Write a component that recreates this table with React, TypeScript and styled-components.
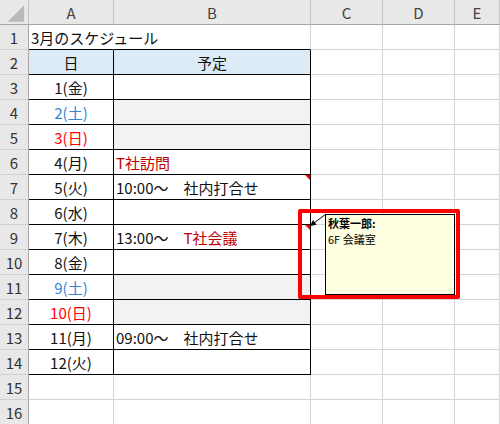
import React from "react";
import styled, { createGlobalStyle } from "styled-components";

const Global = createGlobalStyle`
  html, body { margin: 0; padding: 0; background: #fff; overflow: hidden; }
  #root { width: 500px; height: 424px; }
`;

const FONT = `"Noto Sans CJK JP", "Noto Sans", sans-serif`;

const Sheet = styled.div`
  position: relative;
  width: 500px;
  height: 424px;
  overflow: hidden;
  background: #fff;
  font-family: ${FONT};
`;

const Grid = styled.div`
  display: grid;
  grid-template-columns: 29px 85px 197px 72px 72px 45px;
  grid-auto-rows: 25px;
`;

const ColHead = styled.div`
  box-sizing: border-box;
  background: #e8e8e8;
  border-right: 1px solid #c4c4c4;
  border-bottom: 1px solid #a6a6a6;
  display: flex;
  align-items: center;
  justify-content: center;
  font-size: 15px;
  color: #444;
  position: relative;
`;

const RowHead = styled.div`
  box-sizing: border-box;
  background: #e8e8e8;
  border-right: 1px solid #a6a6a6;
  border-bottom: 1px solid #d0d0d0;
  display: flex;
  align-items: center;
  justify-content: center;
  font-size: 15px;
  color: #333;
`;

const Cell = styled.div<{
  $align?: "left" | "center";
  $bg?: string;
  $right?: string;
  $bottom?: string;
  $note?: boolean;
}>`
  box-sizing: border-box;
  position: relative;
  display: flex;
  align-items: center;
  justify-content: ${(p) => (p.$align === "center" ? "center" : "flex-start")};
  padding: 0 2px;
  font-size: 15px;
  color: #111;
  white-space: nowrap;
  background: ${(p) => p.$bg ?? "transparent"};
  border-right: 1px solid ${(p) => p.$right ?? "#d4d4d4"};
  border-bottom: 1px solid ${(p) => p.$bottom ?? "#d4d4d4"};
  &::after {
    content: "";
    display: ${(p) => (p.$note ? "block" : "none")};
    position: absolute;
    top: 0;
    right: 0;
    width: 0;
    height: 0;
    border-top: 5px solid #ff0000;
    border-left: 5px solid transparent;
  }
`;

const Ink = styled.span<{ $color: string }>`
  color: ${(p) => p.$color};
`;

const Comment = styled.div`
  position: absolute;
  left: 325px;
  top: 214px;
  width: 130px;
  height: 81px;
  box-sizing: border-box;
  border: 1px solid #000;
  background: #ffffe1;
  padding: 0 2px;
  font-family: ${FONT};
  font-size: 11px;
  line-height: 16px;
  color: #000;
`;

const Author = styled.div`
  font-weight: 700;
`;

const Highlight = styled.div`
  position: absolute;
  left: 298px;
  top: 209px;
  width: 162px;
  height: 90px;
  box-sizing: border-box;
  border: 4px solid #ff0000;
  border-radius: 2px;
`;

const Overlay = styled.svg`
  position: absolute;
  left: 0;
  top: 0;
  pointer-events: none;
`;

const BLUE = "#2f85d8";
const RED = "#ff0000";
const DARKRED = "#c00000";
const GREY = "#f2f2f2";

type Row = {
  a?: React.ReactNode;
  aColor?: string;
  b?: React.ReactNode;
  grey?: boolean;
  note?: boolean;
};

const days: Row[] = [
  { a: "1(金)" },
  { a: "2(土)", aColor: BLUE, grey: true },
  { a: "3(日)", aColor: RED, grey: true },
  { a: "4(月)", b: <Ink $color={DARKRED}>T社訪問</Ink> },
  { a: "5(火)", b: "10:00～　社内打合せ", note: true },
  { a: "6(水)" },
  {
    a: "7(木)",
    b: (
      <>
        13:00～　<Ink $color={DARKRED}>T社会議</Ink>
      </>
    ),
    note: true,
  },
  { a: "8(金)" },
  { a: "9(土)", aColor: BLUE, grey: true },
  { a: "10(日)", aColor: RED, grey: true },
  { a: "11(月)", b: "09:00～　社内打合せ" },
  { a: "12(火)" },
];

const EmptyCDE = () => (
  <>
    <Cell />
    <Cell />
    <Cell />
  </>
);

export default function App() {
  return (
    <>
      <Global />
      <Sheet>
        <Grid>
          <ColHead>
            <svg width="29" height="24" viewBox="0 0 29 24">
              <polygon points="8,22 25,22 25,5" fill="#b9b9b9" />
            </svg>
          </ColHead>
          {["A", "B", "C", "D", "E"].map((c) => (
            <ColHead key={c}>{c}</ColHead>
          ))}

          <RowHead>1</RowHead>
          <Cell $right="transparent" $bottom="#000">
            3月のスケジュール
          </Cell>
          <Cell $bottom="#000" />
          <EmptyCDE />

          <RowHead>2</RowHead>
          <Cell $align="center" $bg="#ddebf7" $right="#000" $bottom="#000">
            日
          </Cell>
          <Cell $align="center" $bg="#ddebf7" $right="#000" $bottom="#000">
            予定
          </Cell>
          <EmptyCDE />

          {days.map((d, i) => (
            <React.Fragment key={i}>
              <RowHead>{i + 3}</RowHead>
              <Cell $align="center" $right="#000" $bottom="#000">
                {d.aColor ? <Ink $color={d.aColor}>{d.a}</Ink> : d.a}
              </Cell>
              <Cell
                $right="#000"
                $bottom="#000"
                $bg={d.grey ? GREY : undefined}
                $note={d.note}
              >
                {d.b}
              </Cell>
              <EmptyCDE />
            </React.Fragment>
          ))}

          {[15, 16].map((n) => (
            <React.Fragment key={n}>
              <RowHead>{n}</RowHead>
              <Cell />
              <Cell />
              <EmptyCDE />
            </React.Fragment>
          ))}
        </Grid>

        <Comment>
          <Author>秋葉一郎:</Author>
          <div>6F 会議室</div>
        </Comment>
        <Highlight />
        <Overlay width="500" height="424" viewBox="0 0 500 424">
          <line x1="326" y1="214" x2="314" y2="223" stroke="#000" strokeWidth="1" />
          <polygon points="310,226 316.6,224.8 313,220" fill="#000" />
        </Overlay>
      </Sheet>
    </>
  );
}
